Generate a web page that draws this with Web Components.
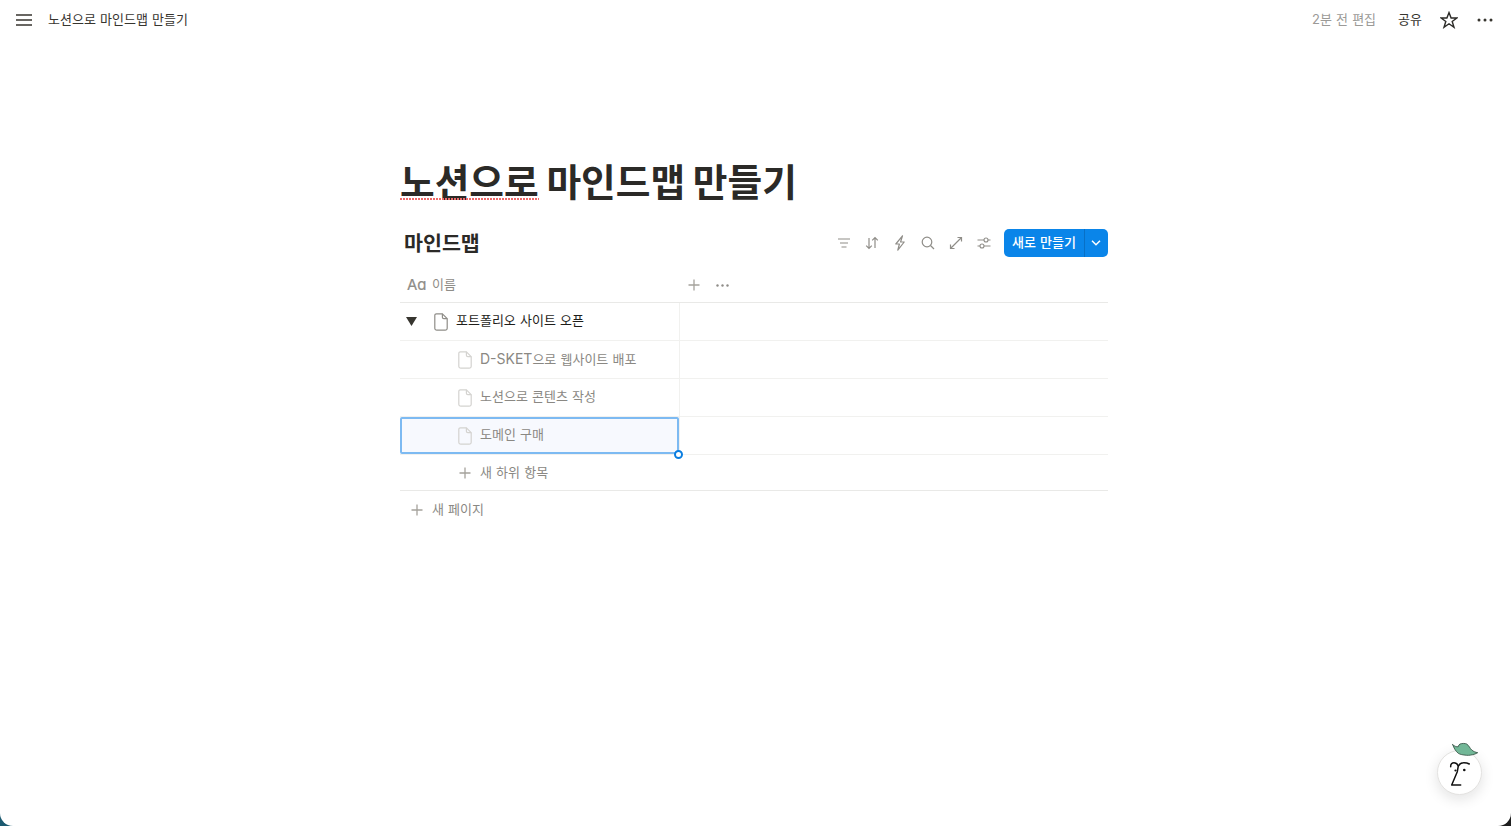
<!DOCTYPE html>
<html lang="ko">
<head>
<meta charset="utf-8">
<title>노션으로 마인드맵 만들기</title>
<style>
    html{ background: linear-gradient(to right, #1c5a70 0 50%, #1e1e1e 50% 100%); }
    body{ margin: 0; font: 13px/1.5 Inter, "Noto Sans CJK KR", sans-serif; color: #37352f; }
    .latin{ font-size: 14px; }
</style>
</head>
<body>
<n-window>
    <n-topbar title="노션으로 마인드맵 만들기" edited="2분 전 편집"></n-topbar>
    <n-page>
        <n-title><n-typo>노션으로</n-typo> 마인드맵 만들기</n-title>
        <n-db-header name="마인드맵"></n-db-header>
        <n-table>
            <n-row toggle dark>포트폴리오 사이트 오픈</n-row>
            <n-row level="1"><span class="latin">D-SKET</span>으로 웹사이트 배포</n-row>
            <n-row level="1">노션으로 콘텐츠 작성</n-row>
            <n-row level="1" selected>도메인 구매</n-row>
            <n-row level="1" add short>새 하위 항목</n-row>
            <n-newpage>새 페이지</n-newpage>
        </n-table>
    </n-page>
    <n-fab></n-fab>
</n-window>

<script>
const docIcon = (color) => `
    <svg width="14" height="18" viewBox="0 0 14 18" fill="none" stroke="${color}" stroke-width="1.2" stroke-linejoin="round">
        <path d="M2.4 .8H8.4L13.2 5.6V15.2A2 2 0 0 1 11.2 17.2H2.8A2 2 0 0 1 .8 15.2V2.4A1.6 1.6 0 0 1 2.4 .8Z"/>
        <path d="M8.4 .8V4.2A1.4 1.4 0 0 0 9.8 5.6H13.2"/>
    </svg>`;

const plusIcon = `
    <svg width="12" height="12" viewBox="0 0 12 12" fill="none" stroke="#a5a29c" stroke-width="1.3">
        <path d="M6 .5V11.5M.5 6H11.5"/>
    </svg>`;

class NWindow extends HTMLElement{
    constructor(){
        super();
        this.attachShadow({mode: "open"}).innerHTML = `
            <style>
                :host{
                    display: block;
                    position: relative;
                    height: 100vh;
                    overflow: hidden;
                    background: #fff;
                    border-radius: 0 0 13px 13px;
                }
            </style>
            <slot></slot>`;
    };
};

class NTopbar extends HTMLElement{
    constructor(){
        super();
        this.attachShadow({mode: "open"}).innerHTML = `
            <style>
                :host{
                    display: flex;
                    align-items: center;
                    height: 40px;
                    padding: 0 18px 0 16px;
                    font-size: 13px;
                    color: #37352f;
                    word-spacing: .5px;
                }
                .menu{ margin-right: 16px; display: block; }
                .grow{ flex: 1; }
                .edited{ color: #9b9a97; margin-right: 22px; }
                .share{ margin-right: 18px; }
                .star{ margin-right: 19px; display: block; }
                .more{ display: block; }
            </style>
            <svg class="menu" width="16" height="12" viewBox="0 0 16 12" stroke="#37352f" stroke-width="1.4">
                <path d="M0 1H16M0 6H16M0 11H16"/>
            </svg>
            <span>${this.getAttribute("title")}</span>
            <span class="grow"></span>
            <span class="edited">${this.getAttribute("edited")}</span>
            <span class="share">공유</span>
            <svg class="star" width="18" height="18" viewBox="0 0 18 18" fill="none" stroke="#2b2a27" stroke-width="1.4" stroke-linejoin="miter">
                <path d="M9 1.6L11.1 7H16.9L12.2 10.5L14 16.3L9 12.8L4 16.3L5.8 10.5L1.1 7H6.9Z"/>
            </svg>
            <svg class="more" width="16" height="4" viewBox="0 0 16 4" fill="#37352f">
                <circle cx="2" cy="2" r="1.5"/><circle cx="8" cy="2" r="1.5"/><circle cx="14" cy="2" r="1.5"/>
            </svg>`;
    };
};

class NPage extends HTMLElement{
    constructor(){
        super();
        this.attachShadow({mode: "open"}).innerHTML = `
            <style>
                :host{
                    display: flex;
                    flex-direction: column;
                    width: 708px;
                    margin-left: 400px;
                }
            </style>
            <slot></slot>`;
    };
};

class NTitle extends HTMLElement{
    constructor(){
        super();
        this.attachShadow({mode: "open"}).innerHTML = `
            <style>
                :host{
                    display: block;
                    margin-top: 119px;
                    font-size: 37.7px;
                    line-height: 46px;
                    font-weight: 700;
                    color: #2b2a27;
                    white-space: nowrap;
                    word-spacing: -1.2px;
                }
            </style>
            <slot></slot>`;
    };
};

class NTypo extends HTMLElement{
    constructor(){
        super();
        this.attachShadow({mode: "open"}).innerHTML = `
            <style>
                :host{ display: inline-block; position: relative; }
                .squiggle{
                    position: absolute;
                    left: 0; right: 0; bottom: 5px;
                    height: 2px;
                    background: repeating-linear-gradient(to right, #ef6a6a 0 2px, transparent 2px 3px);
                }
            </style>
            <slot></slot><span class="squiggle"></span>`;
    };
};

class NDbHeader extends HTMLElement{
    constructor(){
        super();
        const s = "#8f8d88";
        this.attachShadow({mode: "open"}).innerHTML = `
            <style>
                :host{
                    display: flex;
                    align-items: center;
                    height: 28px;
                    margin-top: 24px;
                    padding-left: 4px;
                }
                .name{ font-size: 20.6px; font-weight: 700; color: #2b2a27; flex: 1; line-height: 28px; padding-top: 2px; }
                .tools{ display: flex; margin-right: 6px; }
                .tool{ width: 28px; height: 28px; display: flex; align-items: center; justify-content: center; }
                .new{
                    display: flex;
                    height: 28px;
                    width: 104px;
                    background: #0a85e9;
                    color: #fff;
                    border-radius: 5px;
                    font-size: 13px;
                    font-weight: 500;
                    line-height: 26px;
                    word-spacing: .5px;
                }
                .new span{ width: 80px; text-align: center; border-right: 1px solid #0870c6; box-sizing: content-box; }
                .new i{ flex: 1; display: flex; align-items: center; justify-content: center; padding-right: 1px; }
            </style>
            <span class="name">${this.getAttribute("name")}</span>
            <div class="tools">
                <div class="tool"><svg width="14" height="14" viewBox="0 0 14 14" fill="none" stroke="${s}" stroke-width="1.2"><path d="M1 3H13M3 7H11M4.500 11H9.500"/></svg></div>
                <div class="tool"><svg width="14" height="14" viewBox="0 0 14 14" fill="none" stroke="${s}" stroke-width="1.2"><path d="M4 2V12.500M1.200 9.700L4 12.500L6.800 9.700M10 12V1.500M7.200 4.300L10 1.500L12.800 4.300"/></svg></div>
                <div class="tool"><svg width="14" height="16" viewBox="0 0 14 16" fill="none" stroke="${s}" stroke-width="1.2" stroke-linejoin="round"><path d="M9.500 .8L2.800 9H6.400L4.800 15.200L11.200 7H7.600Z"/></svg></div>
                <div class="tool"><svg width="14" height="14" viewBox="0 0 14 14" fill="none" stroke="${s}" stroke-width="1.2"><circle cx="6" cy="6" r="4.800"/><path d="M9.500 9.500L13 13"/></svg></div>
                <div class="tool"><svg width="14" height="14" viewBox="0 0 14 14" fill="none" stroke="${s}" stroke-width="1.2"><path d="M8.500 1.500H12.500V5.500M12.500 1.500L1.500 12.500M1.500 8.500V12.500H5.500"/></svg></div>
                <div class="tool"><svg width="14" height="14" viewBox="0 0 14 14" fill="none" stroke="${s}" stroke-width="1.1"><path d="M.5 4H7M11 4H13.500M.5 10H3M7 10H13.500"/><circle cx="9" cy="4" r="2"/><circle cx="5" cy="10" r="2"/></svg></div>
            </div>
            <div class="new">
                <span>새로 만들기</span>
                <i><svg width="10" height="6" viewBox="0 0 10 6" fill="none" stroke="#fff" stroke-width="1.5"><path d="M1 .8L5 4.800L9 .8"/></svg></i>
            </div>`;
    };
};

class NTable extends HTMLElement{
    constructor(){
        super();
        this.attachShadow({mode: "open"}).innerHTML = `
            <style>
                :host{ display: block; margin-top: 11px; }
                .head{
                    display: flex;
                    align-items: center;
                    height: 34px;
                    border-bottom: 1px solid #e9e9e7;
                    color: #8f8d88;
                    padding-left: 7px;
                }
                .aa{ font-size: 15px; width: 25px; font-feature-settings: "cv11"; color: #8f8d88; -webkit-text-stroke: .2px #8f8d88; }
                .col{ width: 256px; }
                .head svg{ display: block; }
                .dots{ margin-left: 16px; }
            </style>
            <div class="head">
                <span class="aa">Aa</span>
                <span class="col">이름</span>
                ${plusIcon}
                <svg class="dots" width="13" height="3" viewBox="0 0 13 3" fill="#8f8d88"><circle cx="1.500" cy="1.500" r="1.200"/><circle cx="6.500" cy="1.500" r="1.200"/><circle cx="11.500" cy="1.500" r="1.200"/></svg>
            </div>
            <slot></slot>`;
    };
};

class NRow extends HTMLElement{
    constructor(){
        super();
        const level = this.getAttribute("level") || 0;
        const dark = this.hasAttribute("dark");
        const add = this.hasAttribute("add");
        const selected = this.hasAttribute("selected");
        const lead = add ? plusIcon : docIcon(dark ? "#8f8d88" : "#d4d3d0");
        this.attachShadow({mode: "open"}).innerHTML = `
            <style>
                :host{
                    display: grid;
                    grid-template-columns: 280px 1fr;
                    height: ${this.hasAttribute("short") ? 35 : 37}px;
                    border-bottom: 1px solid #f1f1ef;
                    color: ${dark ? "#1f1e1b" : "#8a8883"};
                    word-spacing: .5px;
                }
                :host([short]){ border-bottom-color: #e9e9e7; }
                .cell{
                    position: relative;
                    display: flex;
                    align-items: center;
                    box-sizing: border-box;
                    padding-left: ${6 + level * 52}px;
                    border-right: 1px solid #f1f1ef;
                }
                :host([short]) .cell{ border-right: 0; }
                .toggle{ width: 28px; }
                .toggle svg, .lead svg{ display: block; }
                .lead{ width: 14px; margin-right: 8px; display: flex; justify-content: center; }
                .text{ padding-bottom: ${add ? 0 : 2}px; }
                .sel{
                    position: absolute;
                    inset: 0;
                    background: #f7f9fe;
                    border: 2px solid #7dbaf2;
                    border-radius: 2px;
                    box-sizing: border-box;
                }
                .handle{
                    position: absolute;
                    right: -4px; bottom: -5px;
                    width: 9px; height: 9px;
                    box-sizing: border-box;
                    background: #fff;
                    border: 2px solid #0b7ee0;
                    border-radius: 50%;
                    z-index: 1;
                }
                .toggle, .lead, .text{ position: relative; }
            </style>
            <div class="cell">
                ${selected ? '<div class="sel"></div><div class="handle"></div>' : ""}
                ${this.hasAttribute("toggle") ? '<div class="toggle"><svg width="11" height="9" viewBox="0 0 11 9" fill="#37352f"><path d="M0 0H11L5.500 9Z"/></svg></div>' : ""}
                <div class="lead">${lead}</div>
                <span class="text"><slot></slot></span>
            </div>
            <div></div>`;
    };
};

class NNewpage extends HTMLElement{
    constructor(){
        super();
        this.attachShadow({mode: "open"}).innerHTML = `
            <style>
                :host{
                    display: flex;
                    align-items: center;
                    gap: 9px;
                    height: 37px;
                    padding-left: 11px;
                    color: #8a8883;
                    word-spacing: .5px;
                }
                svg{ display: block; }
            </style>
            ${plusIcon}
            <span><slot></slot></span>`;
    };
};

class NFab extends HTMLElement{
    constructor(){
        super();
        this.attachShadow({mode: "open"}).innerHTML = `
            <style>
                :host{
                    position: absolute;
                    right: 29px; bottom: 31px;
                    width: 45px; height: 45px;
                    box-sizing: border-box;
                    background: #fff;
                    border: 1px solid #e3e2e0;
                    border-radius: 50%;
                    box-shadow: 0 4px 14px rgba(15,15,15,.12);
                }
                svg{ position: absolute; left: -1px; top: -11px; overflow: visible; }
            </style>
            <svg width="45" height="56" viewBox="0 0 45 56" fill="none" stroke-linecap="round" stroke-linejoin="round">
                <path d="M15.700 4.700C17.500 6.300 19.500 7 21.300 6.700C21.500 5.500 22 4.500 23 4C25.500 3.200 28 3.300 29.700 4C32 5.500 33 8.500 34.700 10C36.500 11.500 38.500 12.300 40.700 12.700L38 14C35 15 32 15.500 29.700 15.300C26 15 23 14.500 21.300 13.300C18.500 11.200 17 8 15.700 4.700Z" fill="#72b797" stroke="#2c4a3c" stroke-width=".8"/>
                <path d="M13.700 26.700C13.500 24 15 22.700 17 22.700C19 22.700 20.500 24 21.300 26C22.500 24 24 22.700 26.300 22.700C28.500 22.600 30.500 23 32.300 24" stroke="#111" stroke-width="1.500"/>
                <path d="M21.300 26L20.300 31.700L14.700 45H23.700" stroke="#111" stroke-width="1.500"/>
                <circle cx="18.500" cy="30.500" r="1.100" fill="#111"/><circle cx="27.300" cy="30" r="1.300" fill="#111"/>
            </svg>`;
    };
};

window.customElements.define("n-window", NWindow);
window.customElements.define("n-topbar", NTopbar);
window.customElements.define("n-page", NPage);
window.customElements.define("n-title", NTitle);
window.customElements.define("n-typo", NTypo);
window.customElements.define("n-db-header", NDbHeader);
window.customElements.define("n-table", NTable);
window.customElements.define("n-row", NRow);
window.customElements.define("n-newpage", NNewpage);
window.customElements.define("n-fab", NFab);
</script>
</body>
</html>
